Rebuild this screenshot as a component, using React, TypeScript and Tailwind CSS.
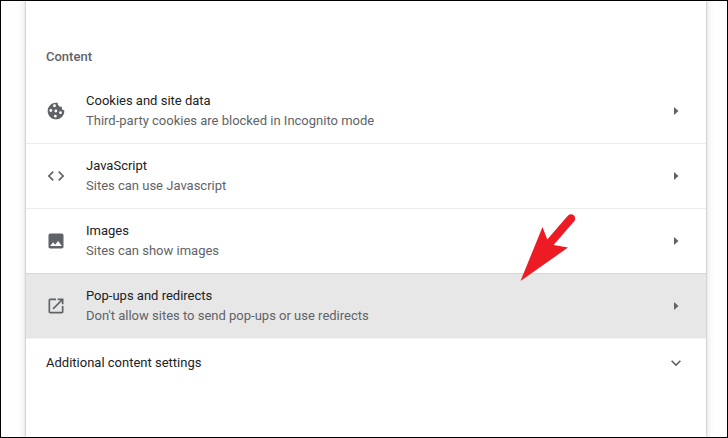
import type { ReactNode } from "react";

function Glyph({ children }: { children: ReactNode }) {
  return (
    <svg viewBox="0 0 24 24" className="h-5 w-5 shrink-0 fill-[#5f6368]">
      {children}
    </svg>
  );
}

const cookie = (
  <Glyph>
    <path
      fillRule="evenodd"
      d="M21.95 10.99c-1.79-.03-3.7-1.95-2.68-4.22-2.98 1-5.77-1.59-5.19-4.56C6.95.71 2 6.58 2 12c0 5.52 4.48 10 10 10 5.89 0 10.54-5.08 9.95-11.01zM10.2 4a1.7 1.7 0 1 1 0 3.4 1.7 1.7 0 0 1 0-3.4zM5.8 9.7a1.7 1.7 0 1 1 0 3.4 1.7 1.7 0 0 1 0-3.4zM11.8 10.3a1.7 1.7 0 1 1 0 3.4 1.7 1.7 0 0 1 0-3.4zM17.4 12.3a1.7 1.7 0 1 1 0 3.4 1.7 1.7 0 0 1 0-3.4zM11.2 16.5a1.7 1.7 0 1 1 0 3.4 1.7 1.7 0 0 1 0-3.4z"
    />
  </Glyph>
);

const code = (
  <Glyph>
    <path d="M9.4 16.6L4.8 12l4.6-4.6L8 6l-6 6 6 6 1.4-1.4zm5.2 0l4.6-4.6-4.6-4.6L16 6l6 6-6 6-1.4-1.4z" />
  </Glyph>
);

const image = (
  <Glyph>
    <path d="M21 19V5c0-1.1-.9-2-2-2H5c-1.1 0-2 .9-2 2v14c0 1.1.9 2 2 2h14c1.1 0 2-.9 2-2zM8.5 13.5l2.5 3.01L14.5 12l4.5 6H5l3.5-4.5z" />
  </Glyph>
);

const popup = (
  <Glyph>
    <path d="M19 19H5V5h7V3H5c-1.11 0-2 .9-2 2v14c0 1.1.89 2 2 2h14c1.1 0 2-.9 2-2v-7h-2v7zM14 3v2h3.59l-9.83 9.83 1.41 1.41L19 6.41V10h2V3h-7z" />
  </Glyph>
);

const rows = [
  { icon: cookie, title: "Cookies and site data", note: "Third-party cookies are blocked in Incognito mode", style: "border-[#ededed]" },
  { icon: code, title: "JavaScript", note: "Sites can use Javascript", style: "border-[#ededed]" },
  { icon: image, title: "Images", note: "Sites can show images", style: "border-[#d6d6d6]" },
  { icon: popup, title: "Pop-ups and redirects", note: "Don't allow sites to send pop-ups or use redirects", style: "border-[#f2f2f2] bg-[#e7e7e7]" },
];

export default function App() {
  return (
    <div className="relative h-[438px] w-[728px] overflow-hidden border border-black bg-[#fefefe] pl-[25px] font-[Roboto,sans-serif] text-[13px] leading-5 text-[#202124]">
      <main className="flex h-full w-[680px] flex-col bg-white shadow-[0_0_2px_rgba(60,64,67,0.4),0_0_6px_2px_rgba(60,64,67,0.12)]">
        <h2 className="mt-[46px] px-5 font-medium text-[#5f6368]">Content</h2>
        <div className="mt-3">
          {rows.map((row) => (
            <div key={row.title} className={`flex h-[65px] items-center border-b px-5 ${row.style}`}>
              {row.icon}
              <div className="ml-5 flex-1">
                <div>{row.title}</div>
                <div className="text-[#5f6368]">{row.note}</div>
              </div>
              <svg viewBox="0 0 20 20" className="h-5 w-5 fill-[#5f6368]">
                <path d="M8 6l4.5 4L8 14z" />
              </svg>
            </div>
          ))}
        </div>
        <div className="flex h-12 items-center justify-between px-5">
          <span>Additional content settings</span>
          <Glyph>
            <path d="M16.59 8.59L12 13.17 7.41 8.59 6 10l6 6 6-6z" />
          </Glyph>
        </div>
      </main>
      <svg viewBox="0 0 60 72" className="absolute left-[518px] top-[211px] h-[72px] w-[60px]">
        <path d="M1.5 69L23.5 15L28.5 28L34.5 33L49 35.5Z" fill="#ed1c24" />
        <path d="M29 33L52 6.5" stroke="#ed1c24" strokeWidth="8.4" strokeLinecap="round" />
      </svg>
    </div>
  );
}
